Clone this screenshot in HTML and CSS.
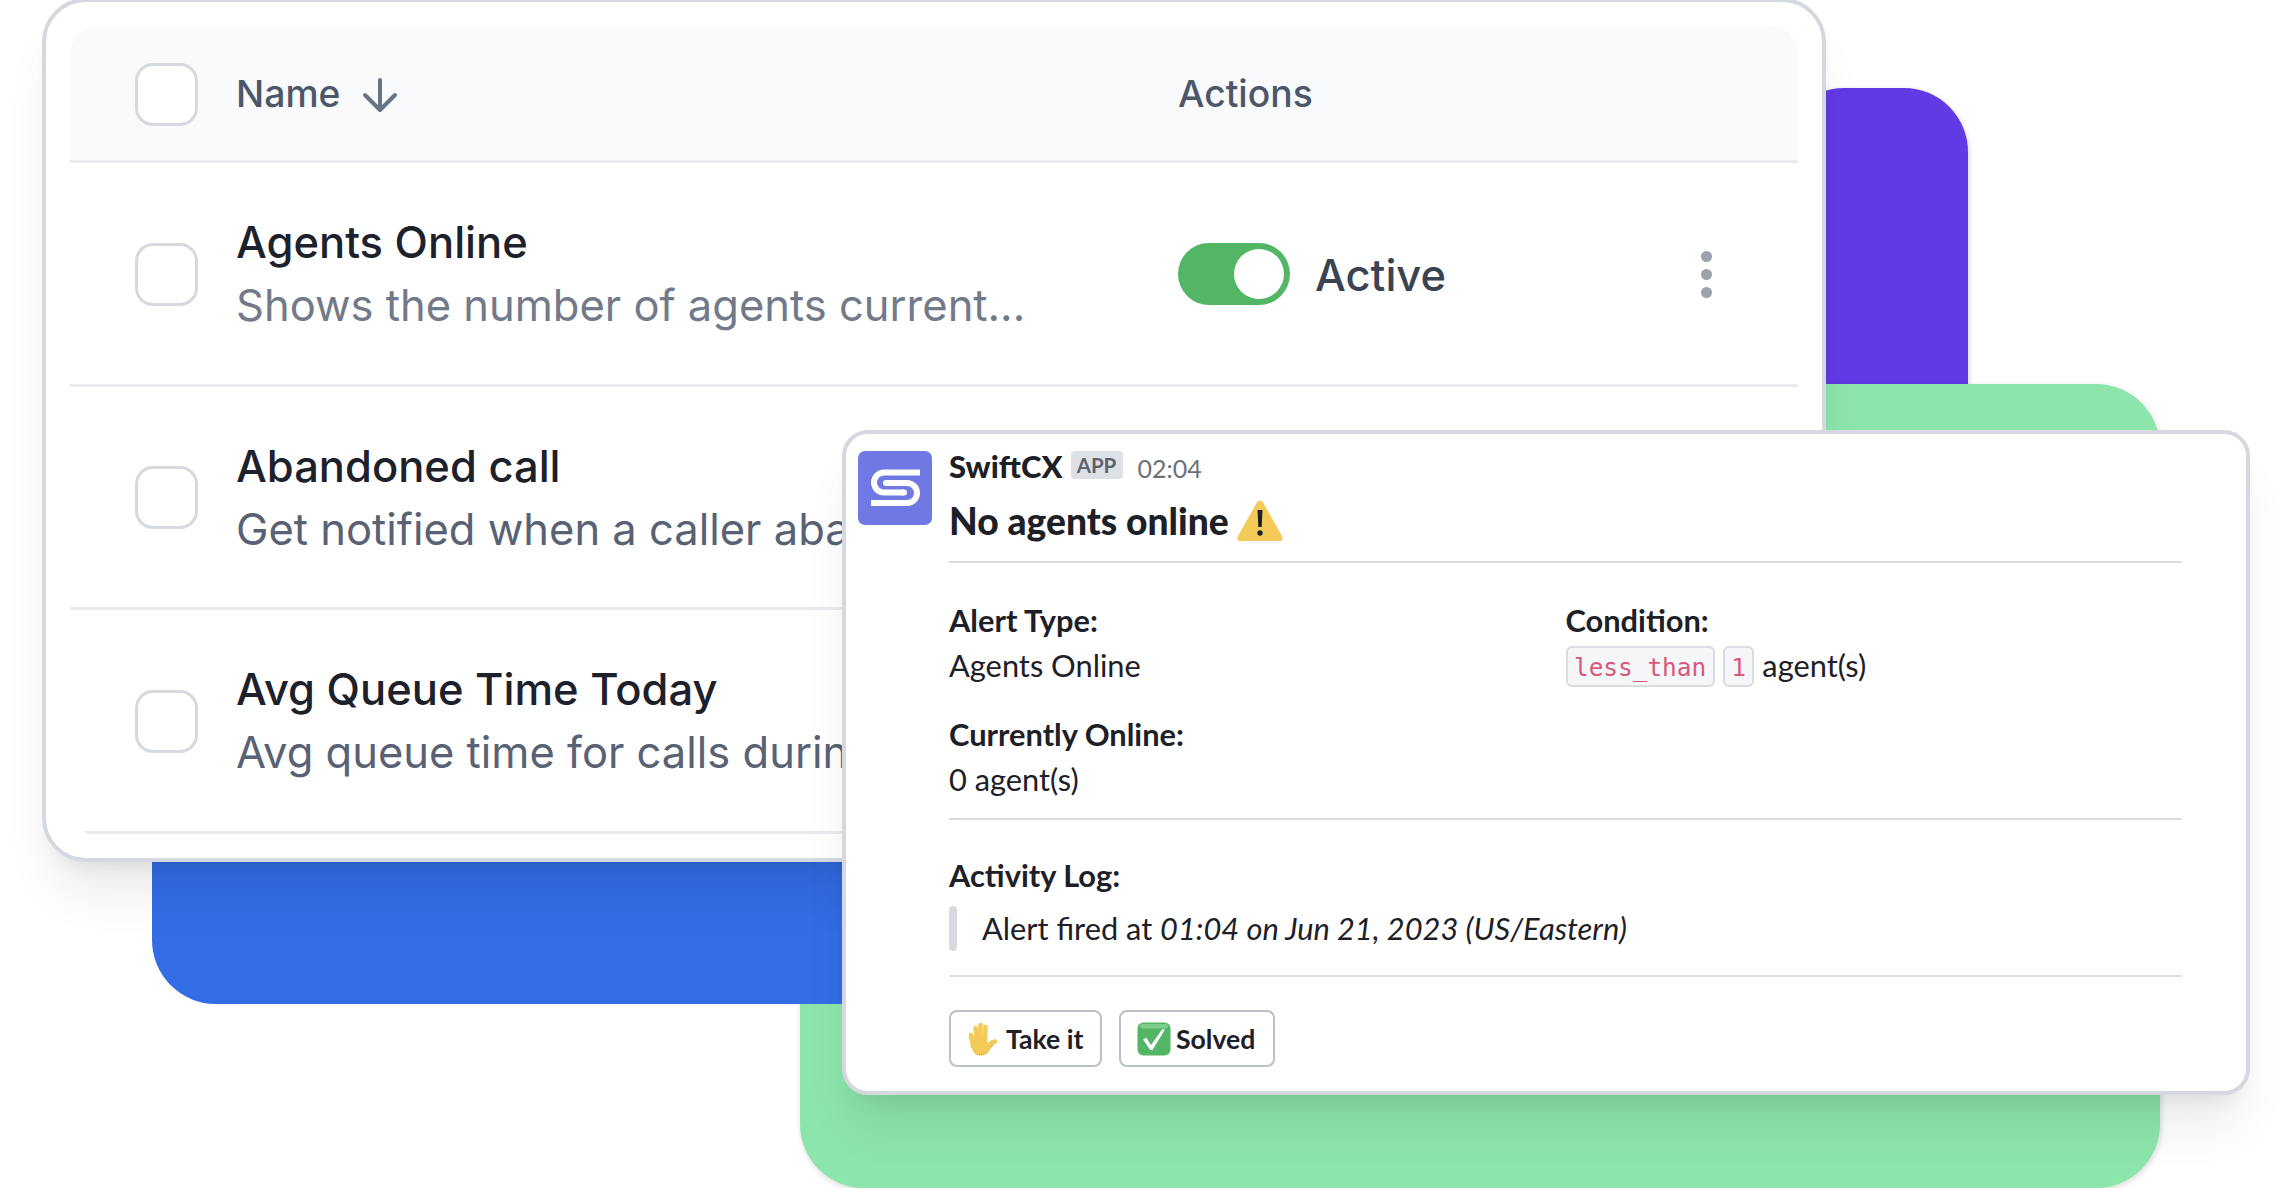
FILE: index.html
```html
<!DOCTYPE html>
<html lang="en">
<head>
  <meta charset="UTF-8">
  <meta name="viewport" content="width=device-width, initial-scale=1.0">
  <title>SwiftCX Alerts</title>
  <link rel="stylesheet" href="styles.css">
</head>
<body>
  <div class="hero">
    <div class="shape shape-purple"></div>
    <div class="shape shape-green"></div>
    <div class="shape shape-blue"></div>

    <div class="table-card">
      <div class="table">
        <div class="table-head">
          <span class="checkbox"></span>
          <div class="col-name head-name">
            <span class="head-label">Name</span>
            <svg class="sort-icon" viewBox="0 0 38 38" fill="none" stroke="#697386" stroke-width="4" stroke-linecap="round" stroke-linejoin="round">
              <path d="M19 4v30M4 19l15 15 15-15"/>
            </svg>
          </div>
          <div class="head-label head-actions">Actions</div>
        </div>
        <div class="row">
          <span class="checkbox"></span>
          <div class="col-name">
            <div class="row-title">Agents Online</div>
            <div class="row-text light">Shows the number of agents current...</div>
          </div>
          <div class="col-actions">
            <span class="toggle"></span>
            <span class="status">Active</span>
            <div class="dots"><i></i><i></i><i></i></div>
          </div>
        </div>
        <div class="row">
          <span class="checkbox"></span>
          <div class="col-name">
            <div class="row-title">Abandoned call</div>
            <div class="row-text">Get notified when a caller aba...</div>
          </div>
        </div>
        <div class="row">
          <span class="checkbox"></span>
          <div class="col-name">
            <div class="row-title">Avg Queue Time Today</div>
            <div class="row-text">Avg queue time for calls durin...</div>
          </div>
        </div>
      </div>
    </div>

    <div class="alert-card">
      <svg class="logo" viewBox="0 0 74 74">
        <rect width="74" height="74" rx="7" fill="#6f78e3"/>
        <g fill="none" stroke="#fff" stroke-width="6">
          <path d="M62 21.500H26a10 10 0 0 0 0 20H46" />
          <path d="M13 52H49a10 10 0 0 0 0-20H28" />
          <path d="M28 32h1M45 41.500h1" stroke-linecap="round"/>
        </g>
      </svg>
      <div class="message">
        <div class="message-head">
          <span class="sender">SwiftCX</span>
          <span class="badge">APP</span>
          <span class="time">02:04</span>
        </div>
        <div class="message-title">
          <span>No agents online</span>
          <svg class="warning" viewBox="0 0 46 41">
            <path d="M20 2.500Q23-1.500 26 2.500L45 36Q47 41 42 41H4Q-1 41 1 36Z" fill="#f4cb58"/>
            <path d="M20.500 10h5l-.8 17h-3.400z" fill="#1d2026"/>
            <circle cx="23" cy="33" r="2.700" fill="#1d2026"/>
          </svg>
        </div>
        <div class="fields">
          <div class="field">
            <div class="label">Alert Type:</div>
            <div>Agents Online</div>
          </div>
          <div class="field">
            <div class="label">Condition:</div>
            <div class="condition"><code>less_than</code><code>1</code><span>agent(s)</span></div>
          </div>
          <div class="field">
            <div class="label">Currently Online:</div>
            <div>0 agent(s)</div>
          </div>
        </div>
        <div class="log">
          <div class="label">Activity Log:</div>
          <div class="quote">Alert fired at <em>01:04 on Jun 21, 2023 (US/Eastern)</em></div>
        </div>
        <div class="buttons">
          <button class="btn">
            <svg class="hand" viewBox="0 0 30 34">
              <g fill="none" stroke="#f4cb58" stroke-width="4.600" stroke-linecap="round">
                <path d="M3 13l2 11M7.500 6l1.500 14M12.500 3v15M17.500 5l-.5 14M27 19.500q-4 0-8 6"/>
              </g>
              <path d="M2.500 17l3-2h13.700v8.500l4-4.500 4 1.500-5 7q-3 6-10 6-6 0-8-6z" fill="#f4cb58"/>
              <path d="M9 32.200q6 1.500 10-2.200M23 25l4.500-4.500" fill="none" stroke="#e0793f" stroke-width="1" stroke-dasharray="1 1"/>
            </svg>
            <span>Take it</span>
          </button>
          <button class="btn btn-solved">
            <svg class="check" viewBox="0 0 34 34">
              <rect x=".5" y=".5" width="33" height="33" rx="6" fill="#53b665"/>
              <rect x="3" y="2" width="28" height="4.500" rx="2.200" fill="#7fce8c"/>
              <path d="M6 17.500l3.300-1.700 4.700 7.200L25 7.500h3L15.500 28h-2.300z" fill="#fff"/>
            </svg>
            <span>Solved</span>
          </button>
        </div>
      </div>
    </div>
  </div>
</body>
</html>
```

FILE: styles.css
```css
* {
    box-sizing: border-box;
}

body {
    margin: 0;
    background: #fff;
    font-family: Inter, "Liberation Sans", sans-serif;
}

.hero {
    position: relative;
    width: 2292px;
    height: 1188px;
    overflow: hidden;
}

/* coloured blocks behind the cards */
.shape {
    position: absolute;
    border-radius: 64px;
    box-shadow: 1px 2px 5px 1px rgba(0, 0, 0, 0.12);
}

.shape-purple {
    left: 1780px;
    top: 88px;
    width: 188px;
    height: 500px;
    background: #613ae4;
}

.shape-green {
    left: 800px;
    top: 384px;
    width: 1360px;
    height: 804px;
    background: #8ce5ab;
}

.shape-blue {
    left: 152px;
    top: 600px;
    width: 900px;
    height: 404px;
    background: #326de6;
    box-shadow: none;
}

/* alerts table */
.table-card {
    position: absolute;
    left: 42px;
    top: -2px;
    width: 1784px;
    height: 864px;
    padding: 24px;
    border: 4px solid #d5d8de;
    border-radius: 44px;
    background: #fff;
    box-shadow: 0 40px 50px -10px rgba(0, 0, 0, 0.08), 0 16px 20px -12px rgba(0, 0, 0, 0.08);
}

.table {
    width: 1728px;
    height: 810px;
    border-radius: 28px;
    overflow: hidden;
}

.table-head,
.row {
    display: flex;
    align-items: center;
    padding: 2px 0 0 65px;
    border-bottom: 3px solid #e9ebef;
}

.table-head {
    height: 137px;
    padding-top: 3px;
    background: #f9fafc;
}

.row {
    height: 223.5px;
}

.checkbox {
    flex: none;
    width: 63px;
    height: 63px;
    border: 3px solid #d6d9df;
    border-radius: 18px;
    background: #fff;
}

.col-name {
    flex: none;
    width: 980px;
    padding-left: 38px;
    white-space: nowrap;
}

.head-name {
    display: flex;
    align-items: center;
    gap: 21px;
}

.head-label {
    padding-bottom: 2px;
    font-size: 37.3px;
    font-weight: 500;
    color: #4d576a;
}

.sort-icon {
    width: 38px;
    height: 38px;
}

.row-title,
.row-text {
    font-size: 43.5px;
    line-height: 63px;
}

.row-title {
    font-weight: 500;
    color: #1c212b;
}

.row-text {
    color: #586274;
}

.row-text.light {
    color: #727a8a;
}

.col-actions {
    flex: 1;
    display: flex;
    align-items: center;
}

.toggle {
    width: 112px;
    height: 62px;
    padding: 6px;
    border-radius: 31px;
    background: #53b665;
}

.toggle::after {
    content: "";
    display: block;
    width: 50px;
    height: 50px;
    margin-left: 50px;
    border-radius: 50%;
    background: #fff;
}

.status {
    margin-left: 25px;
    padding-top: 1px;
    font-size: 43.5px;
    font-weight: 500;
    color: #3a4352;
}

.dots {
    display: flex;
    flex-direction: column;
    gap: 7px;
    margin-left: auto;
    margin-right: 86px;
}

.dots i {
    width: 11px;
    height: 11px;
    border-radius: 50%;
    background: #9ea2ab;
}

/* chat message */
.alert-card {
    position: absolute;
    left: 842px;
    top: 430px;
    width: 1408px;
    height: 665px;
    display: flex;
    gap: 17px;
    padding: 11px 64px 0 12px;
    border: 4px solid #d5d8df;
    border-radius: 26px;
    background: #fff;
    box-shadow: 0 40px 50px -10px rgba(0, 0, 0, 0.08), 0 16px 20px -12px rgba(0, 0, 0, 0.08);
    font-family: Lato, sans-serif;
    font-size: 30.8px;
    line-height: 45px;
    color: #1d2027;
}

.logo {
    flex: none;
    width: 74px;
    height: 74px;
    margin-top: 5.5px;
}

.message {
    flex: 1;
}

.message-head {
    display: flex;
    align-items: center;
    height: 40px;
    line-height: 40px;
}

.sender {
    padding-top: 1px;
    font-size: 31px;
    font-weight: 900;
}

.badge {
    width: 52px;
    height: 28px;
    margin-left: 8px;
    border-radius: 4px;
    background: #dde0e4;
    color: #5c6269;
    font-size: 20.500px;
    font-weight: 700;
    line-height: 29px;
    text-align: center;
}

.time {
    margin-left: 15px;
    padding-top: 5px;
    font-size: 25px;
    line-height: 36px;
    color: #6c7078;
}

.message-title {
    display: flex;
    align-items: center;
    gap: 8px;
    height: 50px;
    margin: 10px 0 16px;
    padding-top: 1px;
    font-size: 37.200px;
    font-weight: 900;
}

.warning {
    width: 46px;
    height: 41px;
}

.fields {
    display: grid;
    grid-template-columns: 1fr 1fr;
    row-gap: 24.500px;
    padding: 34.500px 0 15.500px;
    border-top: 2px solid #d8dbe1;
    border-bottom: 2px solid #d8dbe1;
}

.label {
    font-weight: 700;
}

.condition {
    display: flex;
    align-items: center;
    gap: 8px;
}

code {
    height: 41px;
    margin-top: 3px;
    padding: 0 6.500px;
    border: 2px solid #d8dbe1;
    border-radius: 6px;
    background: #f5f6f8;
    color: #d9577b;
    font-family: "DejaVu Sans Mono", monospace;
    font-size: 24.4px;
    line-height: 39px;
}

.log {
    padding: 33px 0 24px;
    border-bottom: 2px solid #dcdfe4;
}

.quote {
    display: flex;
    align-items: center;
    height: 45px;
    margin-top: 8px;
    white-space: pre;
}

.quote::before {
    content: "";
    width: 8px;
    height: 45px;
    margin-right: 25px;
    border-radius: 4px;
    background: #d6d9de;
}

.buttons {
    display: flex;
    gap: 17px;
    padding-top: 33.500px;
}

.btn {
    display: flex;
    align-items: center;
    width: 153px;
    height: 57px;
    padding: 0 0 0 17px;
    border: 2px solid #bbc0c8;
    border-radius: 8px;
    background: #fff;
    color: #1d2027;
    font-family: inherit;
    font-size: 26.600px;
    font-weight: 700;
    white-space: nowrap;
}

.btn-solved {
    width: 156px;
    padding-left: 16px;
}

.hand {
    width: 30px;
    height: 34px;
    margin-right: 8px;
}

.check {
    width: 34px;
    height: 34px;
    margin-right: 5px;
}
```
